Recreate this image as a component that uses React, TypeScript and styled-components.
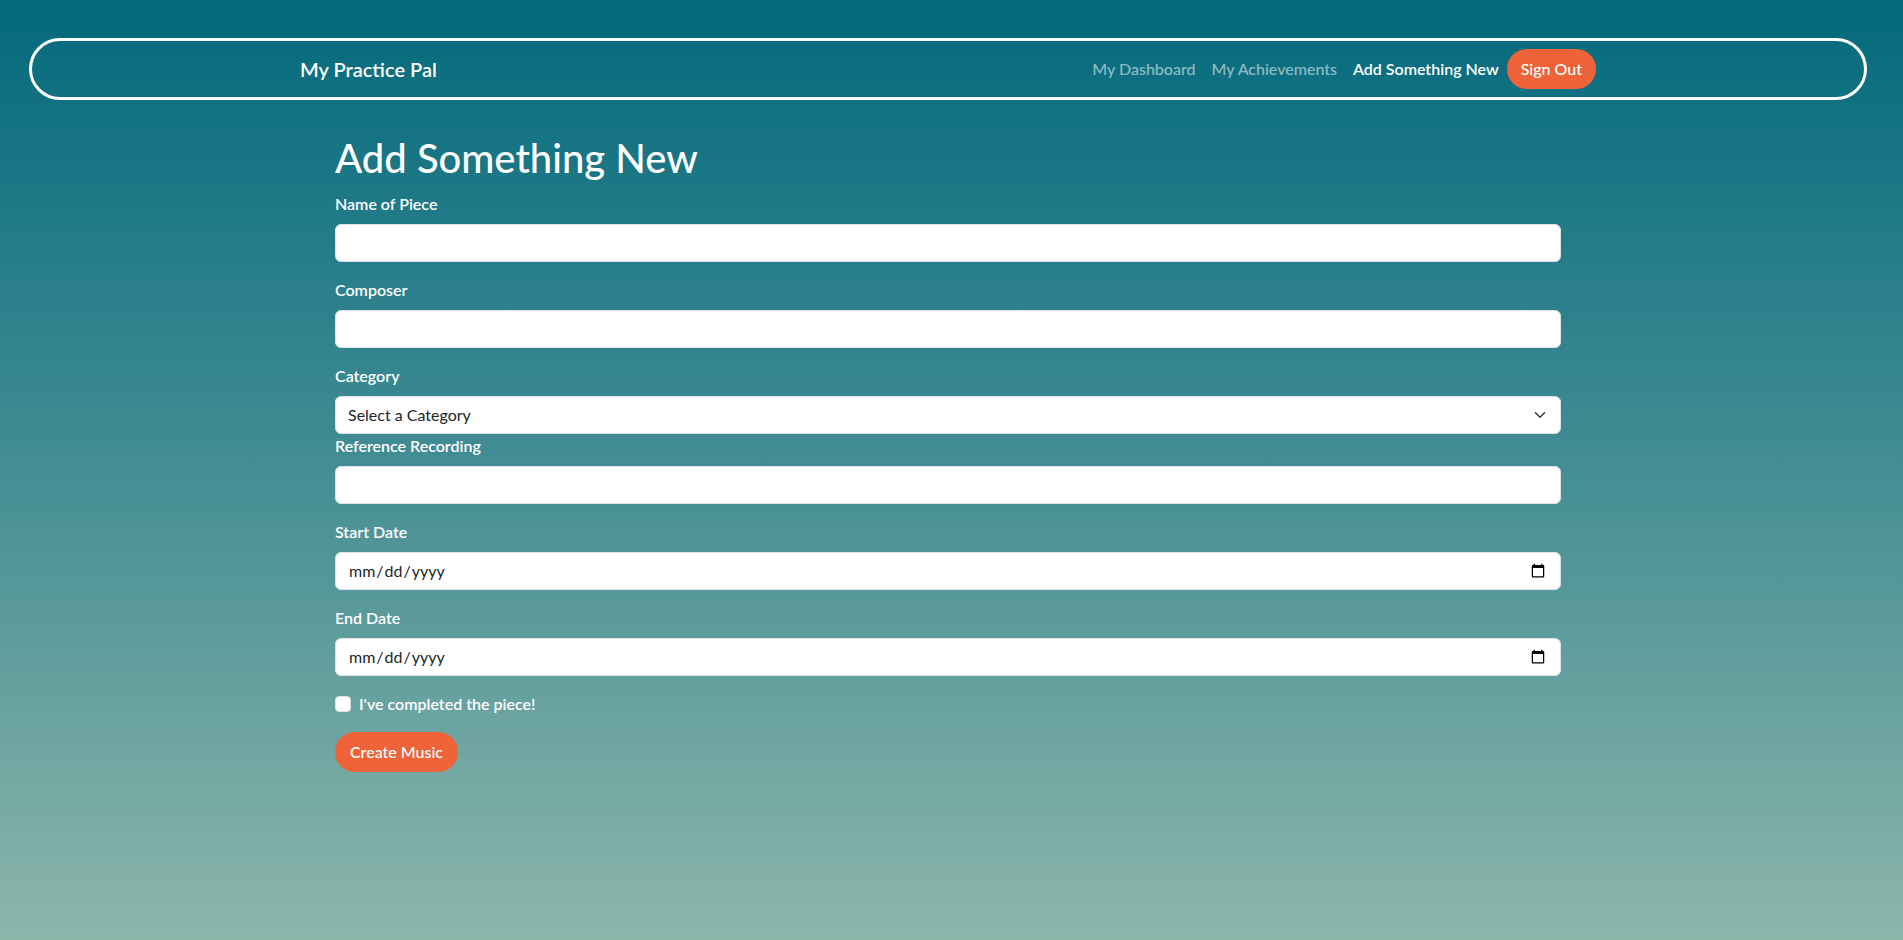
import React from "react";
import styled, { createGlobalStyle } from "styled-components";

const GlobalStyle = createGlobalStyle`
  html, body { margin: 0; padding: 0; }
  body {
    min-height: 940px;
    background: linear-gradient(180deg, #03697c 0%, #3d8a92 45%, #8db6ab 100%);
    font-family: "Lato", "Noto Sans", sans-serif;
    color: #ffffff;
  }
  * { box-sizing: border-box; }
`;

const Page = styled.div`
  min-height: 940px;
  padding: 38px 36px 0 29px;
`;

const NavBar = styled.nav`
  height: 62px;
  border: 3px solid #ffffff;
  border-radius: 31px;
  display: flex;
  align-items: center;
`;

const NavInner = styled.div`
  width: 100%;
  max-width: 1320px;
  margin: 0 auto;
  padding: 0 12px;
  display: flex;
  align-items: center;
  justify-content: space-between;
`;

const Brand = styled.a`
  font-size: 20px;
  font-weight: 600;
  color: #ffffff;
  text-decoration: none;
`;

const NavLinks = styled.div`
  display: flex;
  align-items: center;
`;

const NavLink = styled.a<{ $active?: boolean }>`
  padding: 8px 8px;
  font-size: 16px;
  font-weight: ${(p) => (p.$active ? 600 : 500)};
  color: ${(p) => (p.$active ? "#ffffff" : "rgba(255,255,255,0.55)")};
  text-decoration: none;
  line-height: 24px;
`;

const PillButton = styled.button`
  border: none;
  background: #ee6438;
  color: #ffffff;
  font-family: inherit;
  font-size: 16px;
  font-weight: 500;
  line-height: 24px;
  padding: 8px 14px;
  border-radius: 20px;
  cursor: pointer;
`;

const Main = styled.main`
  max-width: 1226px;
  margin: 0 auto;
`;

const Title = styled.h1`
  margin: 34px 0 10px;
  font-size: 40px;
  font-weight: 500;
  line-height: 48px;
  color: #ffffff;
`;

const Field = styled.div<{ $tight?: boolean }>`
  margin-bottom: ${(p) => (p.$tight ? "0" : "16px")};
`;

const Label = styled.label`
  display: block;
  margin-bottom: 8px;
  font-size: 16px;
  font-weight: 600;
  line-height: 24px;
  color: #ffffff;
`;

const TextInput = styled.input`
  display: block;
  width: 100%;
  height: 38px;
  padding: 6px 12px;
  font-family: inherit;
  font-size: 16px;
  line-height: 24px;
  color: #212529;
  background: #ffffff;
  border: 1px solid #dee2e6;
  border-radius: 6px;
  outline: none;
`;

const SelectBox = styled.select`
  display: block;
  width: 100%;
  height: 38px;
  padding: 6px 36px 6px 12px;
  font-family: inherit;
  font-size: 16px;
  line-height: 24px;
  color: #212529;
  background-color: #ffffff;
  background-image: url("data:image/svg+xml,%3csvg xmlns='http://www.w3.org/2000/svg' viewBox='0 0 16 16'%3e%3cpath fill='none' stroke='%23343a40' stroke-linecap='round' stroke-linejoin='round' stroke-width='2' d='m2 5 6 6 6-6'/%3e%3c/svg%3e");
  background-repeat: no-repeat;
  background-position: right 12px center;
  background-size: 16px 12px;
  border: 1px solid #dee2e6;
  border-radius: 6px;
  appearance: none;
  outline: none;
`;

const CheckRow = styled.div`
  display: flex;
  align-items: center;
  min-height: 24px;
  margin-bottom: 16px;
`;

const CheckBox = styled.input`
  appearance: none;
  width: 16px;
  height: 16px;
  margin: 0 8px 0 0;
  background: #ffffff;
  border: 1px solid #dee2e6;
  border-radius: 4px;
`;

const CheckLabel = styled.label`
  font-size: 16px;
  font-weight: 600;
  line-height: 24px;
  color: #ffffff;
`;

const SubmitButton = styled(PillButton)`
  padding: 8px 15px;
`;

export default function App() {
  return (
    <>
      <GlobalStyle />
      <Page>
        <NavBar>
          <NavInner>
            <Brand href="#">My Practice Pal</Brand>
            <NavLinks>
              <NavLink href="#">My Dashboard</NavLink>
              <NavLink href="#">My Achievements</NavLink>
              <NavLink href="#" $active>
                Add Something New
              </NavLink>
              <PillButton type="button">Sign Out</PillButton>
            </NavLinks>
          </NavInner>
        </NavBar>
        <Main>
          <Title>Add Something New</Title>
          <form onSubmit={(e) => e.preventDefault()}>
            <Field>
              <Label htmlFor="name">Name of Piece</Label>
              <TextInput id="name" type="text" />
            </Field>
            <Field>
              <Label htmlFor="composer">Composer</Label>
              <TextInput id="composer" type="text" />
            </Field>
            <Field $tight>
              <Label htmlFor="category">Category</Label>
              <SelectBox id="category" defaultValue="">
                <option value="">Select a Category</option>
                <option value="piece">Piece</option>
                <option value="etude">Etude</option>
                <option value="scale">Scale</option>
              </SelectBox>
            </Field>
            <Field>
              <Label htmlFor="recording">Reference Recording</Label>
              <TextInput id="recording" type="text" />
            </Field>
            <Field>
              <Label htmlFor="start">Start Date</Label>
              <TextInput id="start" type="date" />
            </Field>
            <Field>
              <Label htmlFor="end">End Date</Label>
              <TextInput id="end" type="date" />
            </Field>
            <CheckRow>
              <CheckBox id="done" type="checkbox" />
              <CheckLabel htmlFor="done">I've completed the piece!</CheckLabel>
            </CheckRow>
            <SubmitButton type="submit">Create Music</SubmitButton>
          </form>
        </Main>
      </Page>
    </>
  );
}
